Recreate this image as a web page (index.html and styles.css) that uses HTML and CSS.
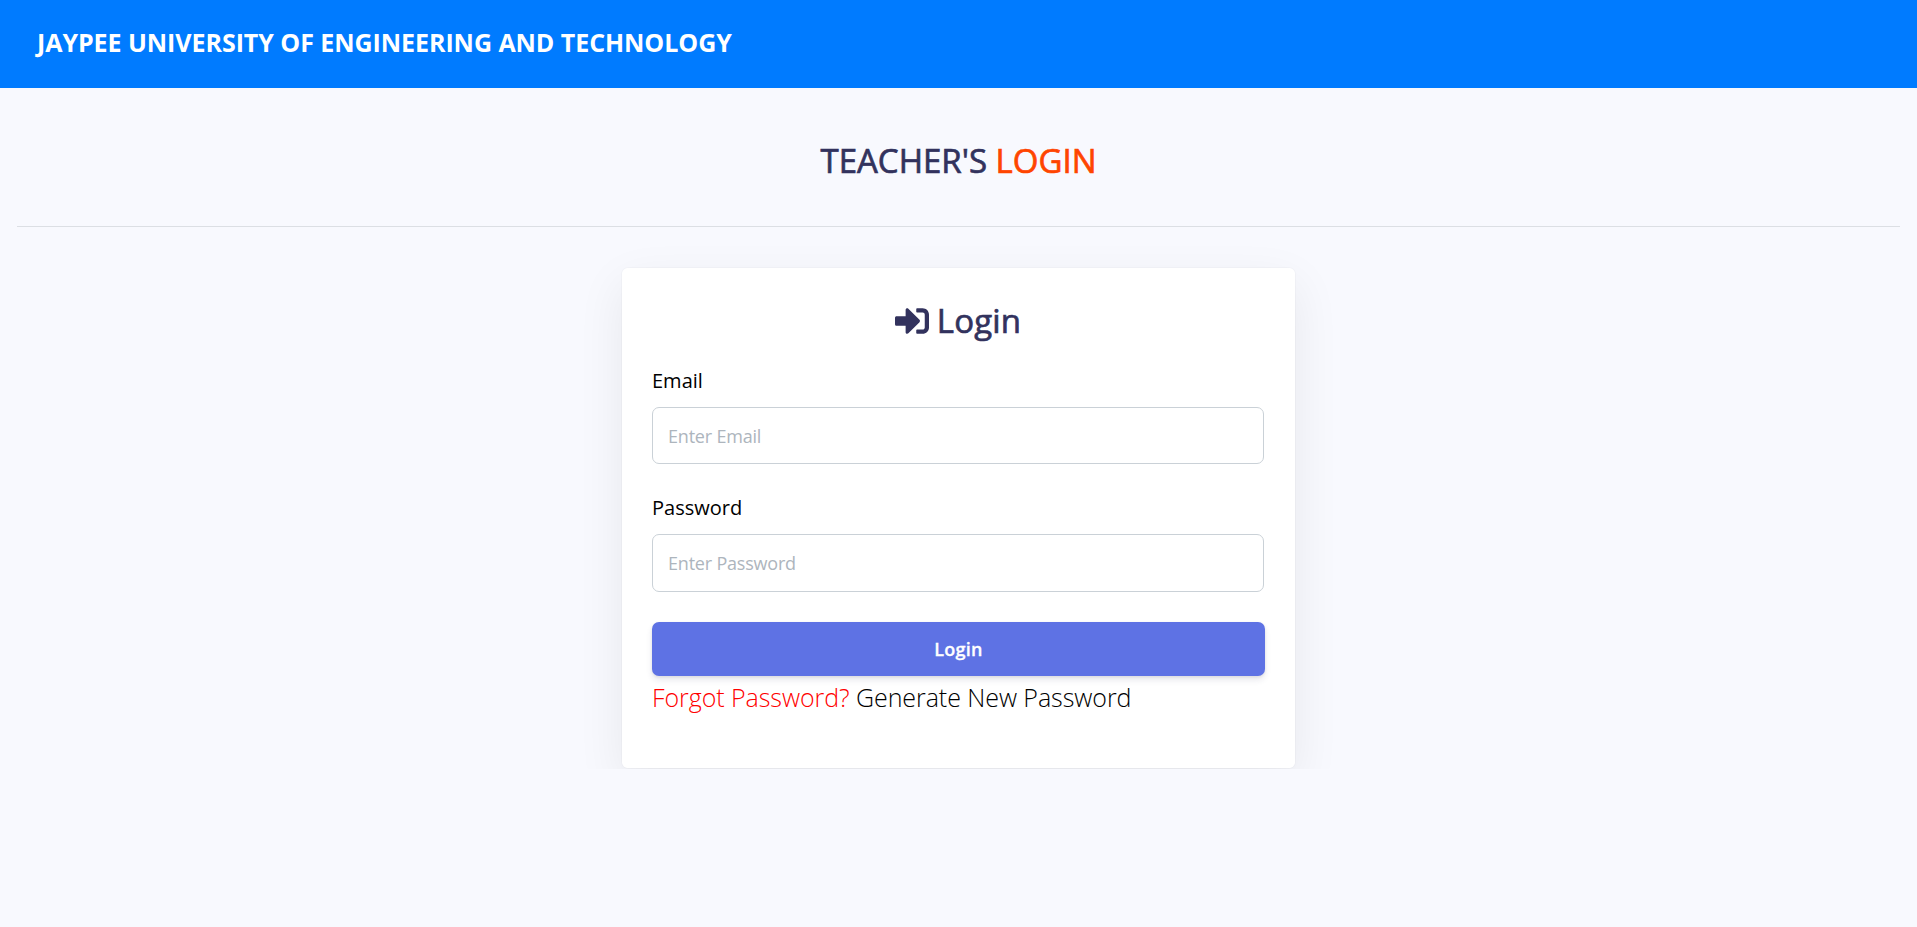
FILE: index.html
```
<!DOCTYPE html>
<html lang="en">
<head>
<meta charset="utf-8">
<title>Teacher's Login</title>
<link rel="stylesheet" href="styles.css">
</head>
<body>
<header class="navbar"><span class="brand">JAYPEE UNIVERSITY OF ENGINEERING AND TECHNOLOGY</span></header>
<main>
  <h1 class="title">TEACHER'S <span class="accent">LOGIN</span></h1>
  <hr class="divider">
  <div class="card-wrap">
    <form class="card">
      <h2 class="card-title">
        <svg class="icon" viewBox="0 0 512 512" aria-hidden="true"><path fill="currentColor" d="M416 448h-84c-6.600 0-12-5.400-12-12v-40c0-6.600 5.400-12 12-12h84c17.700 0 32-14.300 32-32V160c0-17.700-14.300-32-32-32h-84c-6.600 0-12-5.400-12-12V76c0-6.600 5.400-12 12-12h84c53 0 96 43 96 96v192c0 53-43 96-96 96zm-47-209L201 71c-15-15-41-4.500-41 17v96H24c-13.300 0-24 10.700-24 24v96c0 13.300 10.700 24 24 24h136v96c0 21.500 26 32 41 17l168-168c9.300-9.400 9.300-24.600 0-34z"/></svg>
        <span>Login</span>
      </h2>
      <label class="label" for="email">Email</label>
      <input class="field" id="email" type="email" placeholder="Enter Email">
      <label class="label second" for="password">Password</label>
      <input class="field tall" id="password" type="password" placeholder="Enter Password">
      <button class="submit" type="button">Login</button>
      <p class="forgot"><span class="danger">Forgot Password?</span> Generate New Password</p>
    </form>
  </div>
</main>
</body>
</html>
```
FILE: styles.css
```
* { box-sizing: border-box; }
body { margin: 0; background: #f8f9fe; font-family: "Open Sans", sans-serif; color: #000; overflow: hidden; }
.navbar { height: 88px; padding: 0 37px; background: #007bff; display: flex; align-items: flex-start; }
.brand { color: #fff; font-size: 25px; font-weight: 700; line-height: 34px; margin-top: 25px; white-space: nowrap; letter-spacing: -.05px; }
.title { margin: 50px 0 0; text-align: center; font-size: 33px; font-weight: 400; line-height: 46px; color: #32325d; -webkit-text-stroke: .7px currentColor; }
.accent { color: #ff4500; }
.divider { margin: 42px 17px 0; border: 0; border-top: 1px solid #dcdfe4; }
.card-wrap { overflow: hidden; padding-top: 40px; }
.card { width: 675px; height: 502px; margin: 0 auto; padding: 30px 30px 0; background: #fff; background-clip: padding-box; border: 1px solid rgba(0,0,0,.02); border-radius: 7px; box-shadow: 0 16px 48px rgba(0,0,0,.07); }
.card-title { margin: 0; display: flex; justify-content: center; align-items: center; gap: 8px; font-size: 33px; font-weight: 400; line-height: 46px; color: #32325d; -webkit-text-stroke: .7px currentColor; }
.card-title span { margin-right: 1px; letter-spacing: .2px; }
.icon { width: 34px; height: 34px; }
.label { display: block; margin-top: 22px; font-size: 20px; line-height: 30px; }
.second { margin-top: 29px; }
.field { display: block; width: 612px; height: 57px; margin-top: 11px; padding: 0 15px; border: 1px solid #cad1d7; border-radius: 7px; background: #fff; font: 400 18px "Open Sans", sans-serif; letter-spacing: -.2px; outline: 0; }
.tall { height: 58px; padding-bottom: 1px; }
.field::placeholder { color: #adb5bd; opacity: 1; }
.submit { display: block; width: 100%; height: 54px; margin-top: 30px; padding: 0; border: 0; border-radius: 7px; background: #5e72e4; color: #fff; font: 600 18px "Open Sans", sans-serif; letter-spacing: .3px; -webkit-text-stroke: .3px currentColor; box-shadow: 0 4px 6px rgba(50,50,93,.11), 0 1px 3px rgba(0,0,0,.08); }
.forgot { margin: 3px 0 0; font-size: 25px; font-weight: 300; line-height: 36px; letter-spacing: -.06px; }
.danger { color: #f00; }
```
